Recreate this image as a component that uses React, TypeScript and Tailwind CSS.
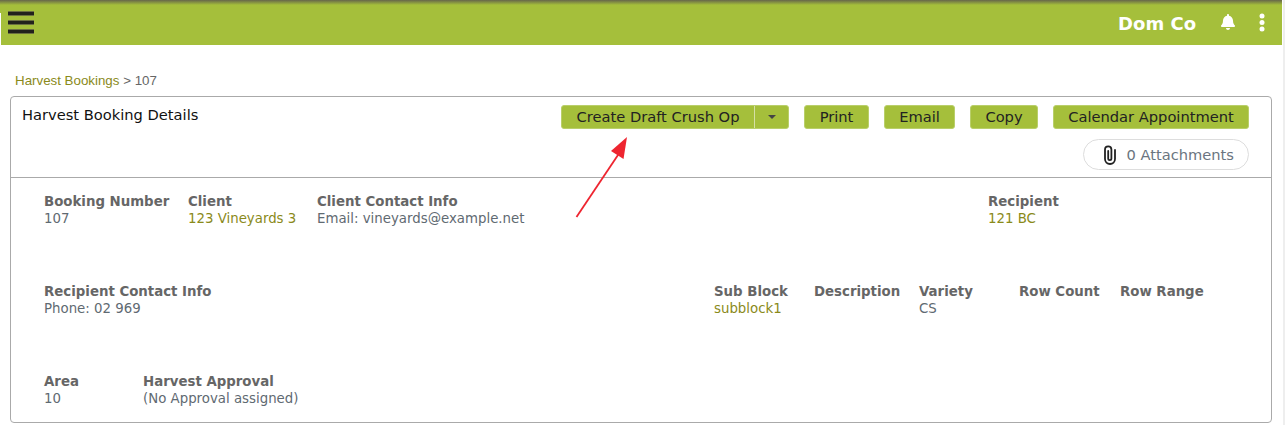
import React from "react";

const verdana = "font-['DejaVu_Sans',Verdana,sans-serif]";

function Btn({ children, w }: { children: React.ReactNode; w: string }) {
  return (
    <div className={`flex h-[24px] items-center justify-center rounded-[3px] border border-[#b9cf6a] bg-[#a5bf3b] text-[14.67px] text-[#222] ${w}`}>
      {children}
    </div>
  );
}

function Field({ label, children, w }: { label: string; children?: React.ReactNode; w: string }) {
  return (
    <div className={w}>
      <div className="text-[13.33px] font-bold leading-[17px] text-[#666]">{label}</div>
      {children && <div className="text-[13.33px] leading-[17px] text-[#5f6a72]">{children}</div>}
    </div>
  );
}

function Bar() {
  return <span className="block h-[5px] w-[26px] border-y border-[#6b7040] bg-[#22221c]" />;
}

export default function App() {
  return (
    <div className={`relative h-[425px] w-[1285px] overflow-hidden border-r-2 border-[#eeeeee] bg-white ${verdana}`}>
      <header className="mr-px flex h-[45px] items-start justify-between bg-[linear-gradient(#66664a_0,#a5bf3b_5px)] pl-[8px] pr-[17px]">
        <div className="mt-[11px] flex flex-col gap-[4px]">
          <Bar />
          <Bar />
          <Bar />
        </div>
        <div className="flex items-center text-white">
          <span className="mt-[13px] text-[18px] font-bold leading-[22px]">Dom Co</span>
          <svg className="ml-[24px] mt-[9px]" width="16" height="16" viewBox="0 0 448 512" fill="currentColor">
            <path d="M224 512c35.300 0 64-28.700 64-64H160c0 35.300 28.700 64 64 64zm215.400-149.700c-19.300-20.800-55.500-52-55.500-154.300 0-77.700-54.500-139.900-127.900-155.200V32c0-17.700-14.300-32-32-32s-32 14.300-32 32v20.800C118.600 68.100 64.100 130.300 64.100 208c0 102.300-36.200 133.500-55.500 154.300-6 6.400-8.700 14.100-8.600 21.700 .1 16.400 13 32 32.100 32h383.800c19.100 0 32-15.600 32.100-32 .1-7.600-2.600-15.300-8.600-21.700z" />
          </svg>
          <svg className="ml-[23px] mt-[9px]" width="6" height="19" viewBox="0 0 6 19" fill="currentColor">
            <circle cx="3" cy="3" r="2.500" />
            <circle cx="3" cy="9.500" r="2.500" />
            <circle cx="3" cy="16" r="2.500" />
          </svg>
        </div>
      </header>
      <span className="absolute left-0 top-[13px] h-[32px] w-px bg-white" />

      <div className="pl-[15px] pt-[28px] font-['Liberation_Sans',Arial,sans-serif] text-[13.33px] leading-[16px] text-[#666]">
        <span className="text-[#8a8a1a]">Harvest Bookings</span> &gt; 107
      </div>

      <main className="ml-[10px] mt-[7px] h-[327px] w-[1262px] rounded-[4px] border border-[#aaa]">
        <section className="flex h-[81px] justify-between border-b border-[#aaa]">
          <h1 className="pl-[11px] pt-[8px] text-[14.67px] font-normal leading-[20px] text-[#111]">Harvest Booking Details</h1>
          <div className="flex flex-col items-end pr-[22px] pt-[8px]">
            <div className="flex gap-[15px]">
              <div className="flex h-[24px] w-[228px] rounded-[3px] border border-[#b9cf6a] bg-[#a5bf3b] text-[14.67px] text-[#222]">
                <span className="flex flex-1 items-center justify-center">Create Draft Crush Op</span>
                <span className="flex w-[34px] items-center justify-center border-l border-[#d5dfa6]">
                  <span className="h-0 w-0 border-x-[4px] border-t-[4px] border-x-transparent border-t-[#444]" />
                </span>
              </div>
              <Btn w="w-[65px]">Print</Btn>
              <Btn w="w-[71px]">Email</Btn>
              <Btn w="w-[68px]">Copy</Btn>
              <Btn w="w-[196px]">Calendar Appointment</Btn>
            </div>
            <div className="mt-[10px] flex h-[31px] w-[166px] items-center justify-end gap-[10px] rounded-full border border-[#ddd] pr-[14px] text-[14.67px] text-[#6b7580]">
              <svg width="12" height="20" viewBox="0 0 12 20" fill="none" stroke="#222" strokeWidth="1.800" strokeLinecap="round">
                <path d="M11 5V14a5 5 0 0 1-10 0V4.500a3.200 3.200 0 0 1 6.400 0V13.500a1.600 1.600 0 0 1-3.200 0V6" />
              </svg>
              <span>0 Attachments</span>
            </div>
          </div>
        </section>

        <section className="pl-[33px] pt-[15px]">
          <div className="flex h-[90px]">
            <Field label="Booking Number" w="w-[144px]">107</Field>
            <Field label="Client" w="w-[129px]"><span className="text-[#8a8a1a]">123 Vineyards 3</span></Field>
            <Field label="Client Contact Info" w="w-[671px]">Email: vineyards@example.net</Field>
            <Field label="Recipient" w="w-[200px]"><span className="text-[#8a8a1a]">121 BC</span></Field>
          </div>
          <div className="flex h-[90px]">
            <Field label="Recipient Contact Info" w="w-[670px]">Phone: 02 969</Field>
            <Field label="Sub Block" w="w-[100px]"><span className="text-[#8a8a1a]">subblock1</span></Field>
            <Field label="Description" w="w-[105px]" />
            <Field label="Variety" w="w-[100px]">CS</Field>
            <Field label="Row Count" w="w-[101px]" />
            <Field label="Row Range" w="w-[100px]" />
          </div>
          <div className="flex h-[60px]">
            <Field label="Area" w="w-[99px]">10</Field>
            <Field label="Harvest Approval" w="w-[200px]">(No Approval assigned)</Field>
          </div>
        </section>
      </main>

      <svg className="absolute left-[570px] top-[130px]" width="66" height="92" viewBox="0 0 66 92" fill="none">
        <line x1="6.500" y1="87" x2="50" y2="22" stroke="#ee2530" strokeWidth="1.800" />
        <polygon points="57,7 53.500,29 41,21" fill="#ee2530" />
      </svg>
    </div>
  );
}
